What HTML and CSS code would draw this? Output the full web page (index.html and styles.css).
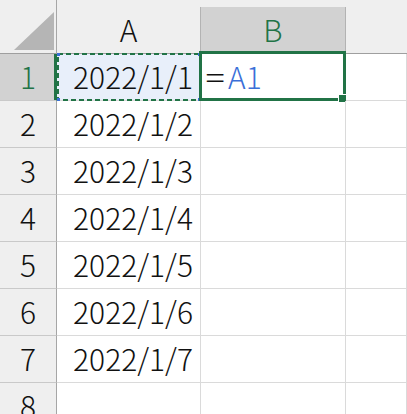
FILE: index.html
```html
<!DOCTYPE html>
<html lang="ja">
<head>
<meta charset="utf-8">
<title>Sheet</title>
<link rel="stylesheet" href="styles.css">
</head>
<body>
<div class="sheet">
  <div class="corner hdr">
    <svg class="tri" width="57" height="54" viewBox="0 0 57 54"><polygon points="14,50 54,50 54,12" fill="#b5b5b5"/></svg>
  </div>
  <div class="col hdr"><div class="lbl">A</div></div>
  <div class="col hdr selc"><div class="lbl">B</div></div>
  <div class="col hdr last"><div class="lbl"></div></div>

  <div class="rh selr">1</div>
  <div class="cell num ref">2022/1/1
    <svg class="marquee" width="144" height="48" viewBox="0 0 144 48">
      <rect x="1" y="1" width="142" height="46" fill="none" stroke="#217346" stroke-width="2" stroke-dasharray="5 3"/>
      <rect x="0" y="0" width="3" height="3" fill="#3a6fd8"/>
      <rect x="141" y="0" width="3" height="3" fill="#3a6fd8"/>
      <rect x="0" y="45" width="3" height="3" fill="#3a6fd8"/>
      <rect x="141" y="45" width="3" height="3" fill="#3a6fd8"/>
    </svg>
  </div>
  <div class="cell txt active"><span class="eq">=</span><span class="refname">A1</span>
    <div class="selbox"><div class="handle"></div></div>
  </div>
  <div class="cell"></div>

  <div class="rh">2</div><div class="cell num">2022/1/2</div><div class="cell"></div><div class="cell"></div>
  <div class="rh">3</div><div class="cell num">2022/1/3</div><div class="cell"></div><div class="cell"></div>
  <div class="rh">4</div><div class="cell num">2022/1/4</div><div class="cell"></div><div class="cell"></div>
  <div class="rh">5</div><div class="cell num">2022/1/5</div><div class="cell"></div><div class="cell"></div>
  <div class="rh">6</div><div class="cell num">2022/1/6</div><div class="cell"></div><div class="cell"></div>
  <div class="rh">7</div><div class="cell num">2022/1/7</div><div class="cell"></div><div class="cell"></div>
  <div class="rh">8</div><div class="cell num"></div><div class="cell"></div><div class="cell"></div>
</div>
</body>
</html>
```

FILE: styles.css
```css
html, body {
  margin: 0;
  padding: 0;
  background: #ffffff;
  overflow: hidden;
}

.sheet {
  display: grid;
  grid-template-columns: 57px 144px 145px 1fr;
  grid-template-rows: 54px repeat(8, 47px);
  width: 407px;
  height: 414px;
  overflow: hidden;
  font-family: "Noto Sans CJK JP", "Noto Sans", sans-serif;
  font-weight: 300;
  font-size: 30px;
  color: #111111;
}

.sheet > div {
  box-sizing: border-box;
  position: relative;
}

.hdr {
  background: #efefef;
  border-bottom: 1px solid #9f9f9f;
}

.corner {
  border-right: 1px solid #a6a6a6;
}

.tri {
  display: block;
  position: absolute;
  left: 0;
  top: 0;
}

.col {
  padding-top: 7px;
}

.col .lbl {
  height: 100%;
  box-sizing: border-box;
  border-right: 1px solid #b3b3b3;
  display: flex;
  align-items: center;
  justify-content: center;
  line-height: 1;
  padding-bottom: 2px;
}

.col.last .lbl {
  border-right: none;
}

.selc {
  border-bottom-color: #217346;
}

.selc .lbl {
  background: #d2d2d2;
  color: #217346;
  box-shadow: inset 0 -2px 0 #217346;
}

.rh {
  background: #efefef;
  border-right: 1px solid #a6a6a6;
  border-bottom: 1px solid #c9c9c9;
  display: flex;
  align-items: center;
  justify-content: center;
  line-height: 1;
  padding-bottom: 2px;
}

.selr {
  background: #d2d2d2;
  color: #217346;
  border-right-color: #217346;
  box-shadow: inset -2px 0 0 #217346;
}

.cell {
  border-right: 1px solid #dadada;
  border-bottom: 1px solid #dadada;
  display: flex;
  align-items: center;
  line-height: 1;
  padding-bottom: 2px;
}

.num {
  justify-content: flex-end;
  padding-right: 7px;
}

.txt {
  justify-content: flex-start;
  padding-left: 6px;
}

.ref {
  background: #e8effa;
}

.marquee {
  position: absolute;
  left: 0;
  top: -1px;
  display: block;
}

.eq {
  color: #111111;
  display: inline-block;
  transform: scaleX(1.2);
}

.refname {
  color: #3a6fd8;
  margin-left: 5px;
}

.selbox {
  position: absolute;
  left: -2px;
  top: -3px;
  right: -1px;
  bottom: -1px;
  border: 3px solid #217346;
}

.handle {
  position: absolute;
  right: -4px;
  bottom: -5px;
  width: 7px;
  height: 7px;
  background: #217346;
  border: 1px solid #ffffff;
}
```
